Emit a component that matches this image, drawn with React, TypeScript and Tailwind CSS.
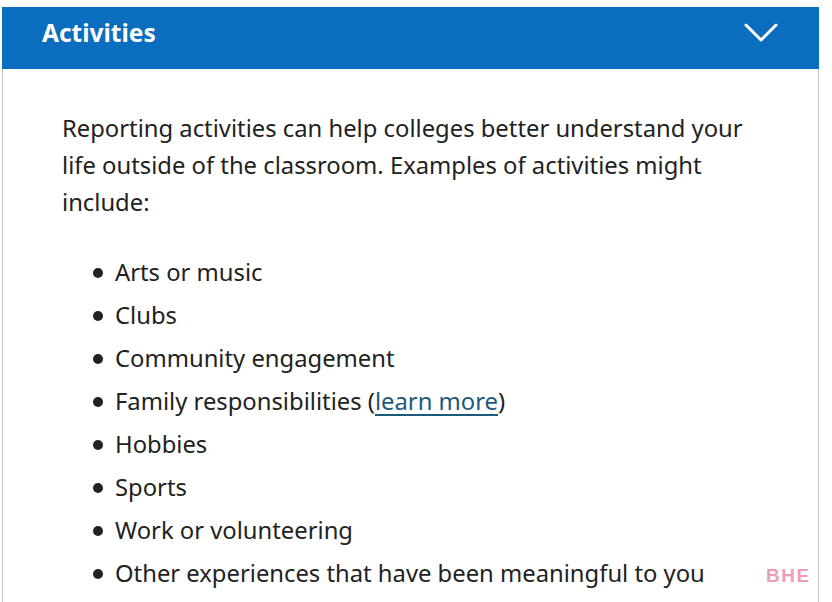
const ITEMS: { text: string; link?: string }[] = [
  { text: "Arts or music" },
  { text: "Clubs" },
  { text: "Community engagement" },
  { text: "Family responsibilities", link: "learn more" },
  { text: "Hobbies" },
  { text: "Sports" },
  { text: "Work or volunteering" },
  { text: "Other experiences that have been meaningful to you" },
];

function Chevron() {
  return (
    <svg width="34" height="20" viewBox="0 0 34 20" fill="none">
      <path d="M2 2 L17 17 L32 2" stroke="white" strokeWidth="3" strokeLinecap="round" strokeLinejoin="round" />
    </svg>
  );
}

export default function App() {
  return (
    <div className="w-[832px] h-[602px] bg-white overflow-hidden pt-[7px] pl-[2px] relative font-['Noto_Sans',sans-serif]">
      <div className="w-[817px]">
        {/* Header */}
        <div className="h-[62px] bg-[#0b6dbd] flex items-center justify-between pl-[40px] pr-[41px] pb-[10px]">
          <h2 className="text-white text-[24.5px] font-bold">Activities</h2>
          <Chevron />
        </div>

        {/* Body */}
        <div className="border-l border-r border-[#c4c4c4] h-[540px] pl-[59px] pr-[56px] pt-[41px] text-[#222222] text-[23.8px]">
          <p className="leading-[37px]">
            Reporting activities can help colleges better understand your life outside of the classroom. Examples of activities might include:
          </p>
          <ul className="mt-[30px]">
            {ITEMS.map((item) => (
              <li key={item.text} className="flex items-center h-[43px] leading-[43px]">
                <span className="ml-[31px] w-[10px] h-[10px] rounded-full bg-[#222222] mr-[12px]" />
                <span>
                  {item.text}
                  {item.link && (
                    <>
                      {" ("}
                      <a href="#" className="text-[#1b5a7a] underline underline-offset-[4px]">
                        {item.link}
                      </a>
                      {")"}
                    </>
                  )}
                </span>
              </li>
            ))}
          </ul>
        </div>
      </div>
      <div className="absolute left-[766px] top-[562px] text-[#ee9db4] font-bold text-[19px] tracking-[1.5px] font-['Liberation_Sans',sans-serif]">
        BHE
      </div>
    </div>
  );
}
